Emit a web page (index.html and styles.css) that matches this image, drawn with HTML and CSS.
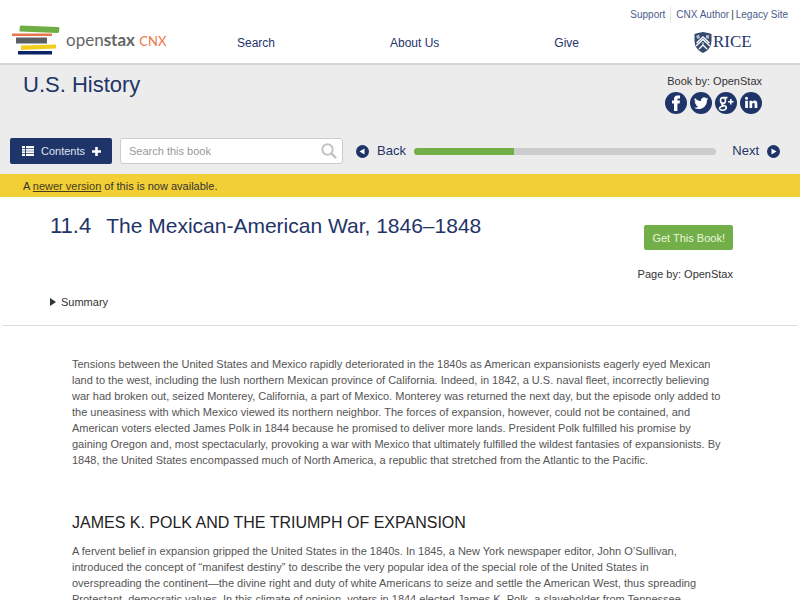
FILE: index.html
```html
<!DOCTYPE html>
<html lang="en">
<head>
<meta charset="utf-8">
<meta name="viewport" content="width=device-width, initial-scale=1">
<title>The Mexican-American War, 1846–1848 - U.S. History</title>
<link rel="stylesheet" href="styles.css">
</head>
<body>
<header class="site-header">
  <nav class="utility">
    <a class="support" href="#">Support</a>
    <a href="#">CNX Author</a><span class="bar">|</span><a href="#">Legacy Site</a>
  </nav>
  <div class="masthead">
    <a class="logo" href="#" aria-label="OpenStax CNX">
      <svg class="stack" viewBox="0 0 48 30" width="48" height="30" aria-hidden="true">
        <path fill="#6fae45" d="M9 0.5 46 2Q47.500 2 47.400 3.500L47 7 46 8 8 6.500Q7.300 6.400 7.400 5.500L8 1Z"/>
        <path fill="#e9764a" d="M0 8.500H40V11H0Z"/>
        <path fill="#5d6063" d="M4 12.500H35V18.500H4Z"/>
        <path fill="#f2cf1d" d="M9 20.500 44 19.500V23.500L9 25Z"/>
        <path fill="#0c2466" d="M6 26H40V29.500H6Z"/>
      </svg>
      <span class="wordmark">open<b>stax</b> <span class="cnx">CNX</span></span>
    </a>
    <nav class="main-nav">
      <a href="#">Search</a>
      <a href="#">About Us</a>
      <a href="#">Give</a>
    </nav>
    <a class="rice" href="#">
      <svg viewBox="0 0 18 21" width="18" height="21" aria-hidden="true">
        <path fill="#34496b" d="M0.500 2 4 1 9 0 14 1 17.500 2V9Q17.500 17 9 21 .5 17 .5 9Z"/>
        <path fill="none" stroke="#fff" stroke-width="1.300" d="M2 14 9 7.500 16 14M2.500 11 9 5 15.500 11M5 17 9 13 13 17"/>
        <path fill="#b5c1d3" d="M2 4 5 2.500 6 6 3.500 7ZM12 3 15.500 3.500 14.500 7 12 6ZM7.500 10.500H10.500L9 13Z"/>
      </svg>
      <span>RICE</span>
    </a>
  </div>
</header>

<section class="book-bar">
  <div class="book-head">
    <h2 class="book-title">U.S. History</h2>
    <div class="book-meta">
      <div>Book by: OpenStax</div>
      <div class="social">
        <a href="#" aria-label="Facebook"><svg viewBox="0 0 22 22" width="22" height="22"><circle cx="11" cy="11" r="11" fill="#1f3468"/><path fill="#fff" d="M9 19V11.500H7V8.500H9V7Q9 3.500 12.500 3.500H15V6.500H13.500Q12.400 6.500 12.400 7.600V8.500H15L14.600 11.500H12.400V19Z"/></svg></a>
        <a href="#" aria-label="Twitter"><svg viewBox="0 0 22 22" width="22" height="22"><circle cx="11" cy="11" r="11" fill="#1f3468"/><path fill="#fff" transform="translate(4 4) scale(.6)" d="M23.950 4.570a10 10 0 0 1-2.820.77 4.960 4.960 0 0 0 2.160-2.720 9.900 9.900 0 0 1-3.120 1.190 4.920 4.920 0 0 0-8.380 4.480C7.690 8.090 4.070 6.130 1.640 3.160a4.920 4.920 0 0 0 1.520 6.570 4.900 4.900 0 0 1-2.230-.61v.06a4.920 4.920 0 0 0 3.950 4.830 5 5 0 0 1-2.210.08 4.940 4.940 0 0 0 4.600 3.420A9.870 9.870 0 0 1 0 19.540a14 14 0 0 0 7.550 2.210c9.050 0 14-7.500 14-13.980 0-.21 0-.42-.02-.63a9.940 9.940 0 0 0 2.460-2.550z"/></svg></a>
        <a href="#" aria-label="Google Plus"><svg viewBox="0 0 22 22" width="22" height="22"><circle cx="11" cy="11" r="11" fill="#1f3468"/><g fill="none" stroke="#fff" stroke-width="1.600"><ellipse cx="8" cy="8.500" rx="2.500" ry="2.900"/><path d="M8.500 5.600H12.500M8 11.400Q5.800 12.500 8 13.300 11.500 14 11.300 16 10.500 18.300 7.500 18.200 4.400 18 4.600 16 5 14.300 8.500 14.200M15.800 7V12.400M13.100 9.700H18.500"/></g></svg></a>
        <a href="#" aria-label="LinkedIn"><svg viewBox="0 0 22 22" width="22" height="22"><circle cx="11" cy="11" r="11" fill="#1f3468"/><circle cx="6.500" cy="6.300" r="1.500" fill="#fff"/><path fill="#fff" d="M5.200 8.700H7.900V16H5.200ZM9.500 8.700H12V9.700Q13 8.500 14.500 8.500 17.300 8.500 17.300 11.600V16H14.600V12.200Q14.600 10.700 13.500 10.700 12.200 10.700 12.200 12.300V16H9.500Z"/></svg></a>
      </div>
    </div>
  </div>
  <div class="toolbar">
    <button class="contents" type="button">
      <svg viewBox="0 0 12 10" width="12" height="10" aria-hidden="true"><path fill="#fff" d="M0 0H3V2H0ZM4 0H12V2H4ZM0 2.700H3V4.700H0ZM4 2.700H12V4.700H4ZM0 5.300H3V7.300H0ZM4 5.300H12V7.300H4ZM0 8H3V10H0ZM4 8H12V10H4Z"/></svg>
      Contents
      <svg viewBox="0 0 9 9" width="9" height="9" aria-hidden="true"><path fill="#fff" d="M3.200 0H5.800V3.200H9V5.800H5.800V9H3.200V5.800H0V3.200H3.200Z"/></svg>
    </button>
    <form class="search">
      <input type="search" placeholder="Search this book" aria-label="Search this book">
      <button type="button" aria-label="Submit search"><svg viewBox="0 0 16 16" width="16" height="16"><circle cx="6.500" cy="6.500" r="5.200" fill="none" stroke="#c4c4c4" stroke-width="2"/><path stroke="#c4c4c4" stroke-width="2.500" stroke-linecap="round" d="M10.500 10.500 14.300 14.300"/></svg></button>
    </form>
    <a class="pager" href="#"><svg viewBox="0 0 13 13" width="13" height="13" aria-hidden="true"><circle cx="6.500" cy="6.500" r="6.500" fill="#1f3468"/><path fill="#fff" d="M8.500 3.500V9.500L3.500 6.500Z"/></svg>Back</a>
    <div class="progress" role="progressbar" aria-label="Progress" aria-valuenow="33" aria-valuemin="0" aria-valuemax="100"><div class="progress-fill" style="width:33%"></div></div>
    <a class="pager" href="#">Next<svg viewBox="0 0 13 13" width="13" height="13" aria-hidden="true"><circle cx="6.500" cy="6.500" r="6.500" fill="#1f3468"/><path fill="#fff" d="M4.500 3.500V9.500L9.500 6.500Z"/></svg></a>
  </div>
</section>

<div class="notice">A <a href="#">newer version</a> of this is now available.</div>

<main>
  <div class="page-head">
    <div class="page-info">
      <h1><span class="number">11.4</span>The Mexican-American War, 1846–1848</h1>
      <details><summary>Summary</summary></details>
    </div>
    <div class="page-side">
      <button class="get-book" type="button">Get This Book!</button>
      <div>Page by: OpenStax</div>
    </div>
  </div>
  <article class="content">
    <p>Tensions between the United States and Mexico rapidly deteriorated in the 1840s as American expansionists eagerly eyed Mexican land to the west, including the lush northern Mexican province of California. Indeed, in 1842, a U.S. naval fleet, incorrectly believing war had broken out, seized Monterey, California, a part of Mexico. Monterey was returned the next day, but the episode only added to the uneasiness with which Mexico viewed its northern neighbor. The forces of expansion, however, could not be contained, and American voters elected James Polk in 1844 because he promised to deliver more lands. President Polk fulfilled his promise by gaining Oregon and, most spectacularly, provoking a war with Mexico that ultimately fulfilled the wildest fantasies of expansionists. By 1848, the United States encompassed much of North America, a republic that stretched from the Atlantic to the Pacific.</p>
    <h3>JAMES K. POLK AND THE TRIUMPH OF EXPANSION</h3>
    <p>A fervent belief in expansion gripped the United States in the 1840s. In 1845, a New York newspaper editor, John O’Sullivan, introduced the concept of “manifest destiny” to describe the very popular idea of the special role of the United States in overspreading the continent—the divine right and duty of white Americans to seize and settle the American West, thus spreading Protestant, democratic values. In this climate of opinion, voters in 1844 elected James K. Polk, a slaveholder from Tennessee,</p>
  </article>
</main>
</body>
</html>
```
FILE: styles.css
```css
* { box-sizing: border-box; }
html { overflow: hidden; }
body {
  margin: 0;
  height: 100vh;
  overflow: hidden;
  background: #fff;
  color: #333;
  font: 11px/16px "Helvetica Neue", "Liberation Sans", Arial, sans-serif;
}
a { color: #1f3468; text-decoration: none; }
button, input { font: inherit; }
svg { display: block; flex: none; }
h1, h2, h3, p { margin: 0; font-weight: 400; }

.site-header {
  height: 65px;
  padding: 7px 12px 0;
  border-bottom: 2px solid #d5d5d5;
}
.utility {
  display: flex;
  justify-content: flex-end;
  font-size: 10px;
}
.utility a { color: #4a5b8c; }
.support {
  margin-right: 5px;
  padding-right: 5px;
  border-right: 1px solid #e4e4e4;
}
.bar { padding: 0 2px; }
.masthead {
  display: grid;
  grid-template-columns: 164px 1fr 56px;
  align-items: center;
  padding-right: 38px;
}
.logo { display: flex; align-items: center; gap: 6px; height: 34px; }
.wordmark { font: 17px/20px Lato, sans-serif; color: #666; white-space: nowrap; }
.cnx { font-size: 13px; color: #e9764a; }
.main-nav {
  display: flex;
  justify-content: space-between;
  padding: 5px 115px 0 61px;
  font-size: 12px;
}
.rice {
  display: flex;
  align-items: center;
  gap: 1px;
  padding-top: 4px;
  font: 17px/20px "Liberation Serif", serif;
}

.book-bar { background: #ececec; padding: 8px 20px 10px 10px; }
.book-head { display: flex; justify-content: space-between; height: 65px; }
.book-title { padding-left: 13px; font-size: 22px; line-height: 24px; color: #1f3468; }
.book-meta { margin-right: 18px; text-align: right; }
.social { display: flex; justify-content: flex-end; gap: 3px; margin-top: 3px; }
.toolbar { display: flex; align-items: center; }
.contents {
  display: flex;
  align-items: center;
  gap: 7px;
  height: 26px;
  padding: 0 11px 0 12px;
  border: 0;
  border-radius: 2px;
  background: #1f3468;
  color: #dfe4f0;
}
.search {
  display: flex;
  align-items: center;
  width: 223px;
  height: 26px;
  margin: 0 13px 0 8px;
  padding: 0 5px 0 8px;
  border: 1px solid #ccc;
  border-radius: 3px;
  background: #fff;
}
.search input { flex: 1; min-width: 0; padding: 0; border: 0; background: none; outline: 0; }
.search input::placeholder { color: #999; opacity: 1; }
.search button { padding: 0; border: 0; background: none; }
.pager { display: flex; align-items: center; gap: 8px; font-size: 13px; }
.progress {
  flex: 1;
  height: 7px;
  margin: 0 16px 0 8px;
  border-radius: 4px;
  background: #ccc;
  overflow: hidden;
}
.progress-fill { height: 100%; background: #73af48; }

.notice { padding: 4px 23px 3px; background: #f1cf35; }
.notice a { color: #443d20; text-decoration: underline; }

.page-head {
  display: flex;
  justify-content: space-between;
  margin: 0 3px;
  padding: 16px 64px 15px 47px;
  border-bottom: 1px solid #ddd;
}
h1 { font-size: 21px; line-height: 26px; color: #1f3468; }
.number { margin-right: 15px; font-size: 22px; }
details { margin-top: 55px; }
summary { list-style: none; display: flex; align-items: center; gap: 5px; }
summary::before {
  content: "";
  border: solid transparent;
  border-width: 4px 0 4px 6px;
  border-left-color: #333;
}
.page-side { padding-top: 12px; text-align: right; }
.get-book {
  height: 25px;
  margin-bottom: 16px;
  padding: 0 8px;
  border: 0;
  border-radius: 2px;
  background: #73af48;
  color: #e9f5df;
}
.content { padding: 30px 79px 0 72px; color: #555; }
h3 { margin: 45px 0 10px; font-size: 16px; line-height: 20px; color: #222; }
```
